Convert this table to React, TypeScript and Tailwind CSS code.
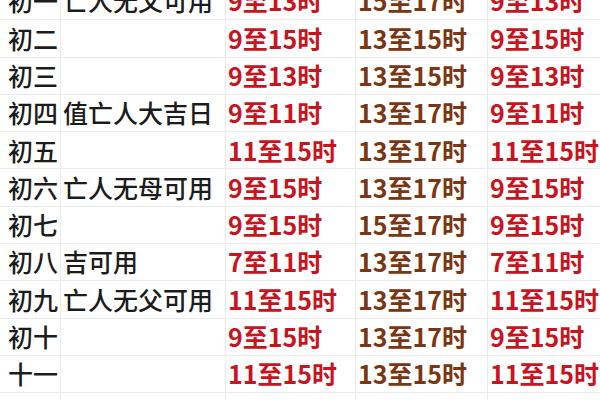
import React from 'react'

type Row = { day: string; note: string; a: string; b: string; c: string }

const rows: Row[] = [
  { day: '初一', note: '亡人无父可用', a: '9至13时', b: '15至17时', c: '9至13时' },
  { day: '初二', note: '', a: '9至15时', b: '13至15时', c: '9至15时' },
  { day: '初三', note: '', a: '9至13时', b: '13至15时', c: '9至13时' },
  { day: '初四', note: '值亡人大吉日', a: '9至11时', b: '13至17时', c: '9至11时' },
  { day: '初五', note: '', a: '11至15时', b: '13至17时', c: '11至15时' },
  { day: '初六', note: '亡人无母可用', a: '9至15时', b: '13至17时', c: '9至15时' },
  { day: '初七', note: '', a: '9至15时', b: '15至17时', c: '9至15时' },
  { day: '初八', note: '吉可用', a: '7至11时', b: '13至17时', c: '7至11时' },
  { day: '初九', note: '亡人无父可用', a: '11至15时', b: '13至17时', c: '11至15时' },
  { day: '初十', note: '', a: '9至15时', b: '13至17时', c: '9至15时' },
  { day: '十一', note: '', a: '11至15时', b: '13至15时', c: '11至15时' },
  { day: '', note: '', a: '', b: '', c: '' },
]

const cell = 'h-[37.3px] flex items-center border-b border-r border-[#ebebeb] overflow-hidden whitespace-nowrap'

export default function App() {
  return (
    <div className="w-[600px] h-[400px] overflow-hidden bg-white" style={{ fontFamily: '"Noto Sans CJK SC", "Noto Sans", sans-serif' }}>
      <div className="-mt-[17px] grid grid-cols-[61px_165px_130px_132px_1fr]">
        {rows.map((r, i) => (
          <React.Fragment key={i}>
            <div className={`${cell} pl-[8px] text-[25px] font-medium text-[#1c1c1c]`}>{r.day}</div>
            <div className={`${cell} pl-[2px] text-[25px] font-medium text-[#1c1c1c]`}>{r.note}</div>
            <div className={`${cell} pl-[2px] text-[25px] font-bold text-[#c8141e]`}>{r.a}</div>
            <div className={`${cell} pl-[2px] text-[25px] font-bold text-[#7a3512]`}>{r.b}</div>
            <div className={`${cell} pl-[2px] text-[25px] font-bold text-[#c8141e] border-r-0`}>{r.c}</div>
          </React.Fragment>
        ))}
      </div>
    </div>
  )
}
